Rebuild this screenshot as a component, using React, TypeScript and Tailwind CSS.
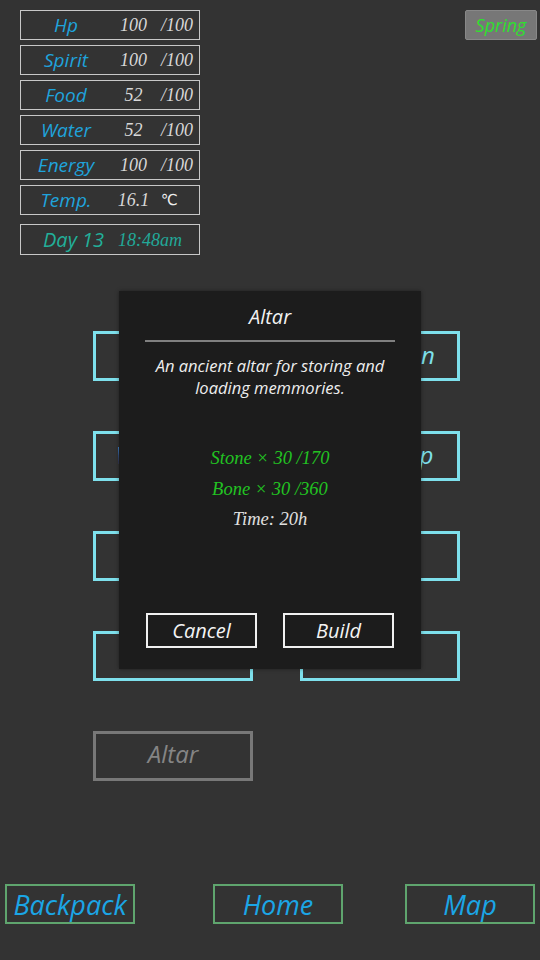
const stats = [
  { label: "Hp", value: "100", max: "/100" },
  { label: "Spirit", value: "100", max: "/100" },
  { label: "Food", value: "52", max: "/100" },
  { label: "Water", value: "52", max: "/100" },
  { label: "Energy", value: "100", max: "/100" },
];

const buildings = ["Fire Pit", "Plantation", "Water Well", "Workshop", "Storage", "Garden", "Bed", "Tent"];

const sans = "font-['Open_Sans','Noto_Sans',sans-serif] italic";
const serif = "font-['Liberation_Serif','DejaVu_Serif',serif] italic";

function StatRow({ label, value, max }: { label: string; value: string; max: string }) {
  return (
    <div className="flex h-[30px] w-[180px] items-center border border-[#c8c8c8]">
      <div className={`w-[90px] text-center text-[19px] leading-none text-[#1fa3dc] ${sans}`}>{label}</div>
      <div className={`w-[45px] text-center text-[18px] leading-none text-[#d8d8d8] ${serif}`}>{value}</div>
      <div className={`pl-[5px] text-[18px] leading-none text-[#d8d8d8] ${serif}`}>{max}</div>
    </div>
  );
}

export default function App() {
  return (
    <div className="relative flex h-[960px] w-[540px] flex-col overflow-hidden bg-[#333333]">
      {/* top: stats + season */}
      <div className="flex items-start justify-between pr-[3px] pl-[20px] pt-[10px]">
        <div className="flex flex-col gap-[5px]">
          {stats.map((s) => (
            <StatRow key={s.label} {...s} />
          ))}
          <div className="flex h-[30px] w-[180px] items-center border border-[#c8c8c8]">
            <div className={`w-[90px] text-center text-[19px] leading-none text-[#1fa3dc] ${sans}`}>Temp.</div>
            <div className={`w-[45px] text-center text-[18px] leading-none text-[#d8d8d8] ${serif}`}>16.1</div>
            <div className="pl-[5px] font-['DejaVu_Sans',sans-serif] text-[15px] leading-none text-[#f0f0f0]">℃</div>
          </div>
          <div className="mt-[4px] flex h-[31px] w-[180px] items-center border border-[#c8c8c8]">
            <div className={`pl-[22px] text-[20px] leading-none text-[#22b09a] ${sans}`}>Day 13</div>
            <div className={`pl-[14px] text-[18px] leading-none text-[#22a898] ${serif}`}>18:48am</div>
          </div>
        </div>
        <div className={`flex h-[30px] w-[72px] items-center justify-center rounded-[2px] border border-[#888] bg-[#777777] text-[18px] leading-none text-[#2ee02e] ${sans}`}>
          Spring
        </div>
      </div>

      {/* buildings */}
      <div className="mt-[76px] grid w-fit grid-cols-[160px_160px] gap-x-[47px] gap-y-[50px] pl-[93px]">
        {buildings.map((b) => (
          <div
            key={b}
            className={`flex h-[50px] items-center justify-center border-[3px] border-[#7ee0ec] pb-[3px] text-[24px] leading-none text-[#7ee0ec] ${sans}`}
          >
            {b}
          </div>
        ))}
        <div className={`flex h-[50px] items-center justify-center border-[3px] border-[#787878] pb-[5px] text-[24px] leading-none text-[#858585] ${sans}`}>
          Altar
        </div>
      </div>

      {/* bottom nav */}
      <div className="mt-auto flex pb-[36px] pl-[5px]">
        {[
          { t: "Backpack", m: "" },
          { t: "Home", m: "ml-[78px]" },
          { t: "Map", m: "ml-[62px]" },
        ].map((n) => (
          <div
            key={n.t}
            className={`flex h-[40px] w-[130px] items-center justify-center border-2 border-[#5fa56e] text-[27px] leading-none text-[#1ba6e6] ${sans} ${n.m}`}
          >
            {n.t}
          </div>
        ))}
      </div>

      {/* modal */}
      <div className="absolute left-[119px] top-[291px] flex h-[378px] w-[302px] flex-col items-center bg-[#1c1c1c] shadow-[0_0_4px_rgba(0,0,0,0.4)]">
        <div className={`pt-[14px] text-[20px] leading-[24px] text-[#f2f2f2] ${sans}`}>Altar</div>
        <div className="mt-[11px] h-[2px] w-[250px] bg-[#808080]" />
        <div className={`mt-[13px] text-center text-[16.5px] leading-[22px] text-[#eeeeee] ${sans}`}>
          An ancient altar for storing and
          <br />
          loading memmories.
        </div>
        <div className={`mt-[44px] flex flex-col items-center text-[18.5px] leading-[30.5px] ${serif}`}>
          <div className="text-[#22c322]">Stone × 30 /170</div>
          <div className="text-[#22c322]">Bone × 30 /360</div>
          <div className="text-[#e0e0e0]">Time: 20h</div>
        </div>
        <div className="mt-auto mb-[21px] flex gap-[26px]">
          <div className={`flex h-[35px] w-[111px] items-center justify-center border-2 border-[#f0f0f0] text-[20px] leading-none text-[#f4f4f4] ${sans}`}>
            Cancel
          </div>
          <div className={`flex h-[35px] w-[111px] items-center justify-center border-2 border-[#f0f0f0] text-[20px] leading-none text-[#f4f4f4] ${sans}`}>
            Build
          </div>
        </div>
      </div>
    </div>
  );
}
